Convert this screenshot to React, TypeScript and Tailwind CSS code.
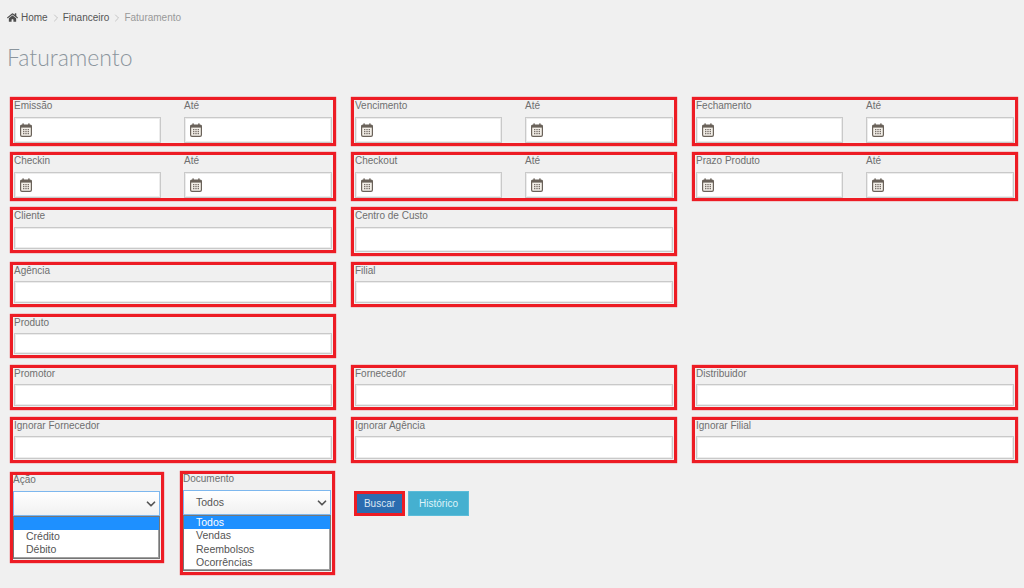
import { ChevronDown, ChevronRight } from "lucide-react";
import { FaHome } from "react-icons/fa";

const CalendarIcon = () => (
  <svg width="12" height="14" viewBox="0 0 12 14" className="shrink-0">
    <rect x="0.6" y="2" width="10.8" height="11.4" rx="1.4" fill="#f3efe8" stroke="#6a625a" strokeWidth="1.2" />
    <rect x="0.6" y="2" width="10.8" height="2.6" fill="#6a625a" />
    <rect x="2.4" y="0.4" width="1.4" height="2.6" fill="#6a625a" />
    <rect x="8.2" y="0.4" width="1.4" height="2.6" fill="#6a625a" />
    <path d="M3 6.6h1.4M5.3 6.6h1.4M7.6 6.6h1.4M3 8.6h1.4M5.3 8.6h1.4M7.6 8.6h1.4M3 10.6h1.4M5.3 10.6h1.4M7.6 10.6h1.4" stroke="#77706a" strokeWidth="1.2" />
  </svg>
);

const inputBox = "bg-white border border-[#c9c9c9] shadow-[inset_0_0_0_1px_#ececec]";

const Label = ({ text, tight }: { text: string; tight?: boolean }) => (
  <div className={tight ? "h-[16px] text-[10px] leading-[11px] text-[#6f6f6f]" : "h-[17px] text-[10px] leading-[11px] text-[#6f6f6f]"}>
    {text}
  </div>
);

const DateBlock = ({ label, heightClass }: { label: string; heightClass: string }) => (
  <div className="border-[3px] border-[#ed1c24] shadow-[0_0_1px_#ed1c24] px-px">
    <div className="grid grid-cols-[147px_148px] gap-x-[23px]">
      {[label, "Até"].map((text) => (
        <div key={text}>
          <Label text={text} />
          <div className={`${inputBox} ${heightClass} flex items-center pl-[5px]`}>
            <CalendarIcon />
          </div>
        </div>
      ))}
    </div>
  </div>
);

const TextBlock = ({ label, heightClass, tight }: { label: string; heightClass: string; tight?: boolean }) => (
  <div className="border-[3px] border-[#ed1c24] shadow-[0_0_1px_#ed1c24] px-px pb-px">
    <Label text={label} tight={tight} />
    <div className={`${inputBox} ${heightClass}`} />
  </div>
);

const SelectLabel = ({ text }: { text: string }) => (
  <div className="h-[16px] text-[10px] leading-[9px] text-[#6f6f6f]">{text}</div>
);

const SelectBox = ({ value }: { value?: string }) => (
  <div className="h-[25px] border border-[#7db7ee] bg-gradient-to-b from-white to-[#f1f1f1] flex items-center justify-between pl-[12px] pr-[1px] text-[10.5px] text-[#555555]">
    <span>{value}</span>
    <ChevronDown size={14} strokeWidth={3} className="text-[#555555]" />
  </div>
);

const App = () => {
  return (
    <div className="min-h-screen bg-[#f0f0f0] pl-[10px] pr-[6px] font-['Liberation_Sans',Arial,sans-serif] overflow-hidden">
      {/* Breadcrumb */}
      <div className="h-[34px] flex items-center pt-px -ml-[3px] text-[10px] text-[#555555]">
        <FaHome size={11} className="text-[#4d4d4d] mr-[3px]" />
        <span>Home</span>
        <ChevronRight size={12} strokeWidth={1.25} className="text-[#aaaaaa] ml-[2px] mr-[1px]" />
        <span>Financeiro</span>
        <ChevronRight size={12} strokeWidth={1.25} className="text-[#aaaaaa] ml-[2px] mr-[1px]" />
        <span className="text-[#999999]">Faturamento</span>
      </div>

      {/* Title */}
      <h1 className="-ml-[3px] h-[63px] pt-[7px] font-['Lato',sans-serif] font-light text-[23px] leading-[32px] text-[#8b959d]">
        Faturamento
      </h1>

      {/* Filters */}
      <div className="grid grid-cols-[326px_326px_326px] gap-x-[15px] items-start">
        <DateBlock label="Emissão" heightClass="h-[26px]" />
        <DateBlock label="Vencimento" heightClass="h-[26px]" />
        <DateBlock label="Fechamento" heightClass="h-[26px]" />
      </div>
      <div className="mt-[6px] grid grid-cols-[326px_326px_326px] gap-x-[15px] items-start">
        <DateBlock label="Checkin" heightClass="h-[26px]" />
        <DateBlock label="Checkout" heightClass="h-[26px]" />
        <DateBlock label="Prazo Produto" heightClass="h-[26px]" />
      </div>
      <div className="mt-[6px] grid grid-cols-[326px_326px_326px] gap-x-[15px] items-start h-[49px]">
        <TextBlock label="Cliente" heightClass="h-[22px]" />
        <TextBlock label="Centro de Custo" heightClass="h-[25px]" />
      </div>
      <div className="mt-[6px] grid grid-cols-[326px_326px_326px] gap-x-[15px] items-start">
        <TextBlock label="Agência" tight heightClass="h-[22px]" />
        <TextBlock label="Filial" tight heightClass="h-[22px]" />
      </div>
      <div className="mt-[7px] grid grid-cols-[326px_326px_326px] gap-x-[15px] items-start">
        <TextBlock label="Produto" tight heightClass="h-[21px]" />
      </div>
      <div className="mt-[7px] grid grid-cols-[326px_326px_326px] gap-x-[15px] items-start">
        <TextBlock label="Promotor" tight heightClass="h-[22px]" />
        <TextBlock label="Fornecedor" tight heightClass="h-[22px]" />
        <TextBlock label="Distribuidor" tight heightClass="h-[22px]" />
      </div>
      <div className="mt-[7px] grid grid-cols-[326px_326px_326px] gap-x-[15px] items-start">
        <TextBlock label="Ignorar Fornecedor" tight heightClass="h-[23px]" />
        <TextBlock label="Ignorar Agência" tight heightClass="h-[23px]" />
        <TextBlock label="Ignorar Filial" tight heightClass="h-[23px]" />
      </div>

      {/* Selects and buttons */}
      <div className="mt-[8px] flex items-start">
        <div className="mt-px w-[154px] border-[3px] border-[#ed1c24] shadow-[0_0_1px_#ed1c24] pr-px pb-px">
          <SelectLabel text="Ação" />
          <SelectBox />
          <div className="h-[43px] bg-white border border-[#767676] shadow-[inset_-1px_-1px_0_#a0a0a0] text-[10.5px] leading-[13.3px] text-[#555555]">
            <div className="h-[13px] bg-[#1e90ff]" />
            <div className="pl-[12px]">Crédito</div>
            <div className="pl-[12px]">Débito</div>
          </div>
        </div>

        <div className="ml-[16px] w-[155px] border-[3px] border-[#ed1c24] shadow-[0_0_1px_#ed1c24] pr-px pb-px">
          <SelectLabel text="Documento" />
          <SelectBox value="Todos" />
          <div className="h-[56px] bg-white border border-[#767676] shadow-[inset_-1px_-1px_0_#a0a0a0] text-[10.5px] leading-[13.3px] text-[#555555]">
            <div className="bg-[#1e90ff] pl-[12px] text-white">Todos</div>
            <div className="pl-[12px]">Vendas</div>
            <div className="pl-[12px]">Reembolsos</div>
            <div className="pl-[12px]">Ocorrências</div>
          </div>
        </div>

        <div className="ml-[19px] mt-[20px] flex gap-[3px] text-[10px]">
          <button className="h-[25px] w-[51px] border-[3px] border-[#ed1c24] bg-[#2b6cb0] text-[#dbe7f3]">Buscar</button>
          <button className="h-[25px] w-[61px] border border-[#5bbcd9] bg-[#45b0d0] text-[#dff3f9]">Histórico</button>
        </div>
      </div>
    </div>
  );
};

export default App;
